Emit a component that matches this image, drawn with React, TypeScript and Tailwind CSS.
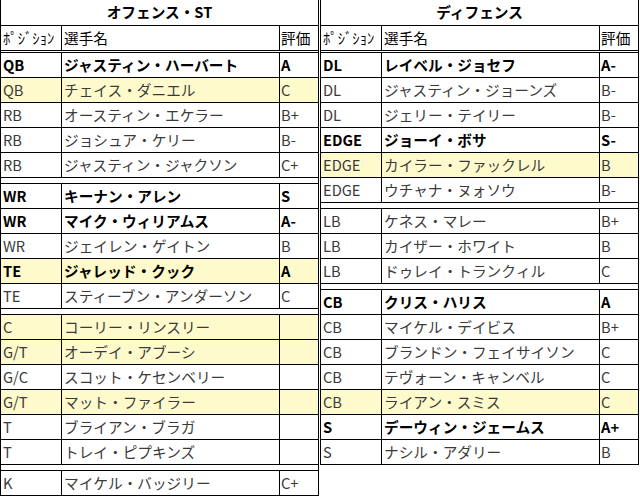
import React from "react";

type Player = {
  pos: string;
  name: string;
  grade?: string;
  bold?: boolean;
  hl?: boolean;
};

const offense: Player[][] = [
  [
    { pos: "QB", name: "ジャスティン・ハーバート", grade: "A", bold: true },
    { pos: "QB", name: "チェイス・ダニエル", grade: "C", hl: true },
    { pos: "RB", name: "オースティン・エケラー", grade: "B+" },
    { pos: "RB", name: "ジョシュア・ケリー", grade: "B-" },
    { pos: "RB", name: "ジャスティン・ジャクソン", grade: "C+" },
  ],
  [
    { pos: "WR", name: "キーナン・アレン", grade: "S", bold: true },
    { pos: "WR", name: "マイク・ウィリアムス", grade: "A-", bold: true },
    { pos: "WR", name: "ジェイレン・ゲイトン", grade: "B" },
    { pos: "TE", name: "ジャレッド・クック", grade: "A", bold: true, hl: true },
    { pos: "TE", name: "スティーブン・アンダーソン", grade: "C" },
  ],
  [
    { pos: "C", name: "コーリー・リンスリー", hl: true },
    { pos: "G/T", name: "オーデイ・アブーシ", hl: true },
    { pos: "G/C", name: "スコット・ケセンベリー" },
    { pos: "G/T", name: "マット・ファイラー", hl: true },
    { pos: "T", name: "ブライアン・ブラガ" },
    { pos: "T", name: "トレイ・ピプキンズ" },
  ],
  [{ pos: "K", name: "マイケル・バッジリー", grade: "C+" }],
];

const defense: Player[][] = [
  [
    { pos: "DL", name: "レイベル・ジョセフ", grade: "A-", bold: true },
    { pos: "DL", name: "ジャスティン・ジョーンズ", grade: "B-" },
    { pos: "DL", name: "ジェリー・テイリー", grade: "B-" },
    { pos: "EDGE", name: "ジョーイ・ボサ", grade: "S-", bold: true },
    { pos: "EDGE", name: "カイラー・ファックレル", grade: "B", hl: true },
    { pos: "EDGE", name: "ウチャナ・ヌォソウ", grade: "B-" },
  ],
  [
    { pos: "LB", name: "ケネス・マレー", grade: "B+" },
    { pos: "LB", name: "カイザー・ホワイト", grade: "B" },
    { pos: "LB", name: "ドゥレイ・トランクィル", grade: "C" },
  ],
  [
    { pos: "CB", name: "クリス・ハリス", grade: "A", bold: true },
    { pos: "CB", name: "マイケル・デイビス", grade: "B+" },
    { pos: "CB", name: "ブランドン・フェイサイソン", grade: "C" },
    { pos: "CB", name: "テヴォーン・キャンベル", grade: "C" },
    { pos: "CB", name: "ライアン・スミス", grade: "C", hl: true },
    { pos: "S", name: "デーウィン・ジェームス", grade: "A+", bold: true },
    { pos: "S", name: "ナシル・アダリー", grade: "B" },
  ],
];

function Row({ p }: { p: Player }) {
  return (
    <div
      className={`flex h-[25px] border-b border-black ${
        p.hl ? "bg-[#fffacc]" : ""
      } ${p.bold ? "font-bold text-black" : "text-[#3a3a3a]"}`}
    >
      <div className="w-[61px] border-r border-black pl-[2px] flex items-center">
        {p.pos}
      </div>
      <div className="w-[218px] border-r border-black pl-[2px] flex items-center">
        {p.name}
      </div>
      <div className="flex-1 pl-[1px] flex items-center">{p.grade}</div>
    </div>
  );
}

function Sheet({ title, groups }: { title: string; groups: Player[][] }) {
  return (
    <div className="w-[319px] border-x border-black flex flex-col">
      <div className="h-[25px] flex items-center justify-center font-bold text-black">
        {title}
      </div>
      {/* header */}
      <div className="flex h-[28px] border-t border-b-[3px] border-double border-black text-black">
        <div className="w-[61px] border-r border-black pl-[2px] flex items-center">
          ﾎﾟｼﾞｼｮﾝ
        </div>
        <div className="w-[218px] border-r border-black pl-[2px] flex items-center">
          選手名
        </div>
        <div className="flex-1 pl-[1px] flex items-center">評価</div>
      </div>
      {groups.map((g, i) => (
        <div key={i} className={i > 0 ? "mt-[5px] border-t border-black" : ""}>
          {g.map((p, j) => (
            <Row key={j} p={p} />
          ))}
        </div>
      ))}
    </div>
  );
}

export default function App() {
  return (
    <div
      className="min-h-screen bg-white flex items-start text-[14.67px] leading-none"
      style={{ fontFamily: '"Noto Sans CJK JP", "Noto Sans", sans-serif' }}
    >
      <Sheet title="オフェンス・ST" groups={offense} />
      <div className="ml-[1px]">
        <Sheet title="ディフェンス" groups={defense} />
      </div>
    </div>
  );
}
